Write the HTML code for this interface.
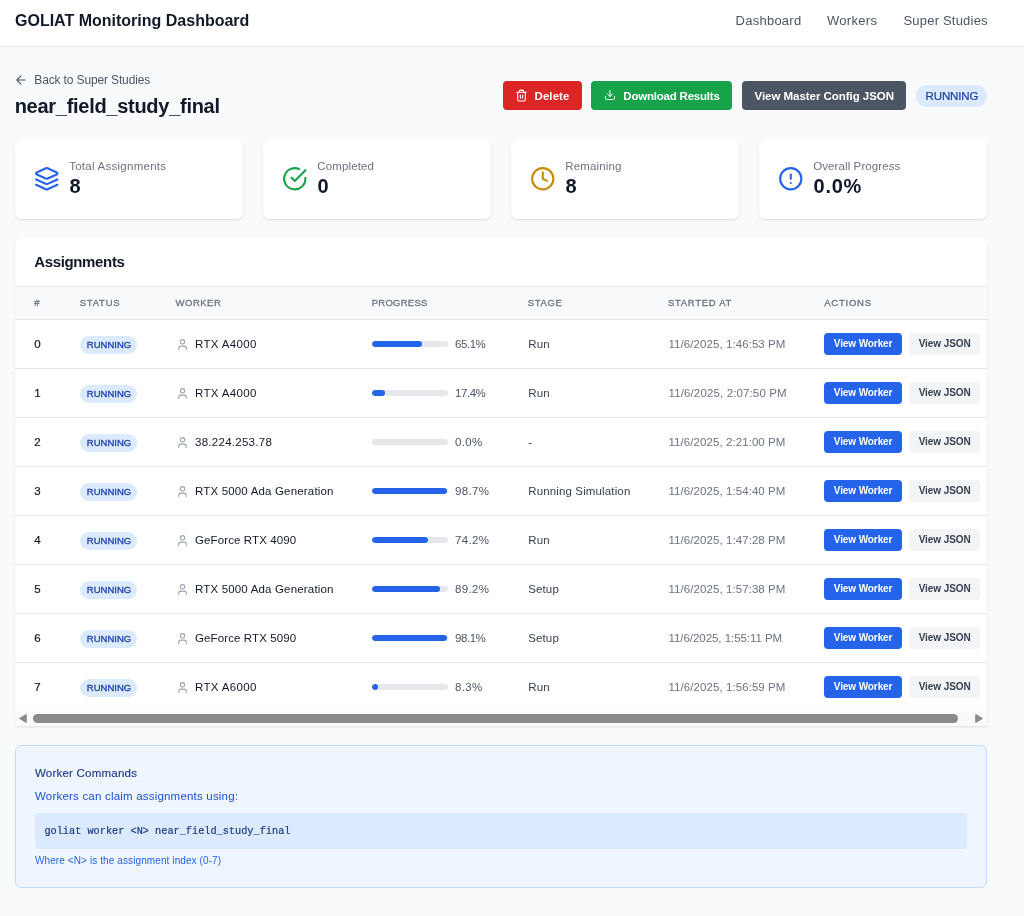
<!DOCTYPE html>
<html><head><meta charset="utf-8"><title>GOLIAT Monitoring Dashboard</title>
<style>
html,body{margin:0;padding:0;}
body{width:1024px;height:916px;position:relative;overflow:hidden;background:#f9fafb;font-family:"Liberation Sans", sans-serif;}
.t{position:absolute;white-space:pre;line-height:1;}
.i{position:absolute;display:block;}
.b{position:absolute;border-radius:4px;}
.card{position:absolute;background:#fff;border-radius:6px;box-shadow:0 1px 3px rgba(0,0,0,0.08),0 1px 2px rgba(0,0,0,0.05);}
</style></head><body><div id="w" style="position:absolute;left:0;top:0;width:1024px;height:916px;will-change:transform">
<div style="position:absolute;left:0;top:0;width:1024px;height:46px;background:#fff;border-bottom:1px solid #e5e7eb"></div>
<div class="t" style="left:15px;top:13.16px;font-size:16px;color:#111827;font-weight:700;letter-spacing:0px;">GOLIAT Monitoring Dashboard</div>
<div class="t" style="left:735.5px;top:13.90px;font-size:13px;color:#4b5563;font-weight:400;letter-spacing:0.26px;">Dashboard</div>
<div class="t" style="left:827px;top:13.90px;font-size:13px;color:#4b5563;font-weight:400;letter-spacing:0.3px;">Workers</div>
<div class="t" style="left:903.5px;top:13.90px;font-size:13px;color:#4b5563;font-weight:400;letter-spacing:0.2px;">Super Studies</div>
<svg class="i" style="left:14.2px;top:72.6px" width="14" height="14" viewBox="0 0 24 24" fill="none" stroke="#4b5563" stroke-width="2" stroke-linecap="round" stroke-linejoin="round"><path d="m12 19-7-7 7-7"/><path d="M19 12H5"/></svg>
<div class="t" style="left:34.3px;top:73.84px;font-size:12px;color:#4b5563;font-weight:400;letter-spacing:-0.14px;">Back to Super Studies</div>
<div class="t" style="left:14.7px;top:95.97px;font-size:20px;color:#111827;font-weight:700;letter-spacing:-0.28px;">near_field_study_final</div>
<div class="b" style="left:503px;top:81px;width:79px;height:29px;background:#dc2626"></div>
<svg class="i" style="left:515px;top:88.5px" width="13" height="13" viewBox="0 0 24 24" fill="none" stroke="#fff" stroke-width="2" stroke-linecap="round" stroke-linejoin="round"><path d="M3 6h18"/><path d="M19 6v14c0 1-1 2-2 2H7c-1 0-2-1-2-2V6"/><path d="M8 6V4c0-1 1-2 2-2h4c1 0 2 1 2 2v2"/><line x1="10" x2="10" y1="11" y2="17"/><line x1="14" x2="14" y1="11" y2="17"/></svg>
<div class="t" style="left:534.5px;top:90.57px;font-size:11.5px;color:#fff;font-weight:700;letter-spacing:0.08px;">Delete</div>
<div class="b" style="left:591px;top:81px;width:141px;height:29px;background:#16a34a"></div>
<svg class="i" style="left:604.2px;top:89.4px" width="12" height="12" viewBox="0 0 24 24" fill="none" stroke="#fff" stroke-width="2" stroke-linecap="round" stroke-linejoin="round"><path d="M21 15v4a2 2 0 0 1-2 2H5a2 2 0 0 1-2-2v-4"/><polyline points="7 10 12 15 17 10"/><line x1="12" x2="12" y1="15" y2="3"/></svg>
<div class="t" style="left:623.3px;top:90.57px;font-size:11.5px;color:#fff;font-weight:700;letter-spacing:-0.21px;">Download Results</div>
<div class="b" style="left:742px;top:81px;width:164px;height:29px;background:#4b5563"></div>
<div class="t" style="left:754.5px;top:90.57px;font-size:11.5px;color:#fff;font-weight:700;letter-spacing:-0.04px;">View Master Config JSON</div>
<div class="b" style="left:916px;top:85px;width:71px;height:22px;background:#dbeafe;border-radius:11px"></div>
<div class="t" style="left:925.6px;top:91.27px;font-size:11.5px;color:#1e40af;font-weight:400;letter-spacing:-0.15px;-webkit-text-stroke:0.2px #1e40af;">RUNNING</div>
<div class="card" style="left:15px;top:139px;width:228px;height:80px"></div>
<svg class="i" style="left:33.9px;top:165.7px" width="25.5" height="25.5" viewBox="0 0 24 24" fill="none" stroke="#2563eb" stroke-width="2" stroke-linecap="round" stroke-linejoin="round"><path d="m12.83 2.18a2 2 0 0 0-1.66 0L2.6 6.08a1 1 0 0 0 0 1.83l8.58 3.91a2 2 0 0 0 1.66 0l8.58-3.9a1 1 0 0 0 0-1.83Z"/><path d="m22 17.65-9.17 4.16a2 2 0 0 1-1.66 0L2 17.65"/><path d="m22 12.65-9.17 4.16a2 2 0 0 1-1.66 0L2 12.65"/></svg>
<div class="t" style="left:69.2px;top:160.97px;font-size:11.5px;color:#6b7280;font-weight:400;letter-spacing:0.26px;">Total Assignments</div>
<div class="t" style="left:69.6px;top:176.07px;font-size:20px;color:#111827;font-weight:700;letter-spacing:0px;">8</div>
<div class="card" style="left:263px;top:139px;width:228px;height:80px"></div>
<svg class="i" style="left:281.9px;top:165.7px" width="25.5" height="25.5" viewBox="0 0 24 24" fill="none" stroke="#16a34a" stroke-width="2" stroke-linecap="round" stroke-linejoin="round"><path d="M22 11.08V12a10 10 0 1 1-5.93-9.14"/><polyline points="22 4 12 14.01 9 11.01"/></svg>
<div class="t" style="left:317.2px;top:160.97px;font-size:11.5px;color:#6b7280;font-weight:400;letter-spacing:0.15px;">Completed</div>
<div class="t" style="left:317.6px;top:176.07px;font-size:20px;color:#111827;font-weight:700;letter-spacing:0px;">0</div>
<div class="card" style="left:511px;top:139px;width:228px;height:80px"></div>
<svg class="i" style="left:529.9px;top:165.7px" width="25.5" height="25.5" viewBox="0 0 24 24" fill="none" stroke="#ca8a04" stroke-width="2" stroke-linecap="round" stroke-linejoin="round"><circle cx="12" cy="12" r="10"/><polyline points="12 6 12 12 16 14"/></svg>
<div class="t" style="left:565.2px;top:160.97px;font-size:11.5px;color:#6b7280;font-weight:400;letter-spacing:0.15px;">Remaining</div>
<div class="t" style="left:565.6px;top:176.07px;font-size:20px;color:#111827;font-weight:700;letter-spacing:0px;">8</div>
<div class="card" style="left:759px;top:139px;width:228px;height:80px"></div>
<svg class="i" style="left:777.9px;top:165.7px" width="25.5" height="25.5" viewBox="0 0 24 24" fill="none" stroke="#2563eb" stroke-width="2" stroke-linecap="round" stroke-linejoin="round"><circle cx="12" cy="12" r="10"/><line x1="12" x2="12" y1="8" y2="12"/><line x1="12" x2="12.01" y1="16" y2="16"/></svg>
<div class="t" style="left:813.2px;top:160.97px;font-size:11.5px;color:#6b7280;font-weight:400;letter-spacing:0.1px;">Overall Progress</div>
<div class="t" style="left:813.6px;top:176.07px;font-size:20px;color:#111827;font-weight:700;letter-spacing:0.7px;">0.0%</div>
<div class="card" style="left:15px;top:238px;width:972px;height:488px;border-radius:6px 6px 0 0;overflow:hidden">
<div class="t" style="left:19.200000000000003px;top:16.40px;font-size:15px;color:#111827;font-weight:700;letter-spacing:-0.35px;">Assignments</div>
<div style="position:absolute;left:0;top:48px;width:990px;height:33px;background:#f9fafb;border-top:1px solid #e5e7eb;border-bottom:1px solid #e5e7eb;box-sizing:border-box;height:34px"></div>
<div class="t" style="left:19.200000000000003px;top:60.46px;font-size:9.5px;color:#6b7280;font-weight:400;letter-spacing:0.4px;-webkit-text-stroke:0.3px #6b7280;">#</div>
<div class="t" style="left:64.7px;top:60.46px;font-size:9.5px;color:#6b7280;font-weight:400;letter-spacing:0.78px;-webkit-text-stroke:0.3px #6b7280;">STATUS</div>
<div class="t" style="left:160.5px;top:60.46px;font-size:9.5px;color:#6b7280;font-weight:400;letter-spacing:0.51px;-webkit-text-stroke:0.3px #6b7280;">WORKER</div>
<div class="t" style="left:356.8px;top:60.46px;font-size:9.5px;color:#6b7280;font-weight:400;letter-spacing:0.24px;-webkit-text-stroke:0.3px #6b7280;">PROGRESS</div>
<div class="t" style="left:512.7px;top:60.46px;font-size:9.5px;color:#6b7280;font-weight:400;letter-spacing:0.65px;-webkit-text-stroke:0.3px #6b7280;">STAGE</div>
<div class="t" style="left:653px;top:60.46px;font-size:9.5px;color:#6b7280;font-weight:400;letter-spacing:0.7px;-webkit-text-stroke:0.3px #6b7280;">STARTED AT</div>
<div class="t" style="left:809.2px;top:60.46px;font-size:9.5px;color:#6b7280;font-weight:400;letter-spacing:0.77px;-webkit-text-stroke:0.3px #6b7280;">ACTIONS</div>
<div style="position:absolute;left:0;top:130px;width:990px;height:1px;background:#e5e7eb"></div>
<div class="t" style="left:19.200000000000003px;top:101.27px;font-size:11.5px;color:#111827;font-weight:400;letter-spacing:0px;-webkit-text-stroke:0.2px #111827;">0</div>
<div class="b" style="left:65px;top:98px;width:57px;height:18px;background:#dbeafe;border-radius:9px"></div>
<div class="t" style="left:71.8px;top:102.36px;font-size:9.5px;color:#1e40af;font-weight:400;letter-spacing:0.0px;-webkit-text-stroke:0.3px #1e40af;">RUNNING</div>
<svg class="i" style="left:161px;top:99.69999999999999px" width="13" height="13" viewBox="0 0 24 24" fill="none" stroke="#9ca3af" stroke-width="2" stroke-linecap="round" stroke-linejoin="round"><path d="M19 21v-2a4 4 0 0 0-4-4H9a4 4 0 0 0-4 4v2"/><circle cx="12" cy="7" r="4"/></svg>
<div class="t" style="left:180px;top:101.27px;font-size:11.5px;color:#111827;font-weight:400;letter-spacing:0.34px;">RTX A4000</div>
<div class="b" style="left:357px;top:103px;width:76px;height:6px;background:#e5e7eb;border-radius:3px;overflow:hidden"><div style="width:49.5px;height:6px;background:#2563eb;border-radius:3px"></div></div>
<div class="t" style="left:440px;top:101.27px;font-size:11.5px;color:#4b5563;font-weight:400;letter-spacing:-0.45000000000000007px;">65.1%</div>
<div class="t" style="left:513.2px;top:101.27px;font-size:11.5px;color:#374151;font-weight:400;letter-spacing:0.14px;">Run</div>
<div class="t" style="left:653.5px;top:101.27px;font-size:11.5px;color:#6b7280;font-weight:400;letter-spacing:0.07px;">11/6/2025, 1:46:53 PM</div>
<div class="b" style="left:809px;top:95px;width:78px;height:22px;background:#2563eb"></div>
<div class="t" style="left:818.8px;top:100.73px;font-size:10px;color:#fff;font-weight:700;letter-spacing:-0.1px;">View Worker</div>
<div class="b" style="left:894px;top:95px;width:71px;height:22px;background:#f3f4f6"></div>
<div class="t" style="left:903.7px;top:100.73px;font-size:10px;color:#374151;font-weight:700;letter-spacing:-0.08px;">View JSON</div>
<div style="position:absolute;left:0;top:179px;width:990px;height:1px;background:#e5e7eb"></div>
<div class="t" style="left:19.200000000000003px;top:150.27px;font-size:11.5px;color:#111827;font-weight:400;letter-spacing:0px;-webkit-text-stroke:0.2px #111827;">1</div>
<div class="b" style="left:65px;top:147px;width:57px;height:18px;background:#dbeafe;border-radius:9px"></div>
<div class="t" style="left:71.8px;top:151.36px;font-size:9.5px;color:#1e40af;font-weight:400;letter-spacing:0.0px;-webkit-text-stroke:0.3px #1e40af;">RUNNING</div>
<svg class="i" style="left:161px;top:148.7px" width="13" height="13" viewBox="0 0 24 24" fill="none" stroke="#9ca3af" stroke-width="2" stroke-linecap="round" stroke-linejoin="round"><path d="M19 21v-2a4 4 0 0 0-4-4H9a4 4 0 0 0-4 4v2"/><circle cx="12" cy="7" r="4"/></svg>
<div class="t" style="left:180px;top:150.27px;font-size:11.5px;color:#111827;font-weight:400;letter-spacing:0.34px;">RTX A4000</div>
<div class="b" style="left:357px;top:152px;width:76px;height:6px;background:#e5e7eb;border-radius:3px;overflow:hidden"><div style="width:13.2px;height:6px;background:#2563eb;border-radius:3px"></div></div>
<div class="t" style="left:440px;top:150.27px;font-size:11.5px;color:#4b5563;font-weight:400;letter-spacing:-0.45000000000000007px;">17.4%</div>
<div class="t" style="left:513.2px;top:150.27px;font-size:11.5px;color:#374151;font-weight:400;letter-spacing:0.14px;">Run</div>
<div class="t" style="left:653.5px;top:150.27px;font-size:11.5px;color:#6b7280;font-weight:400;letter-spacing:0.13px;">11/6/2025, 2:07:50 PM</div>
<div class="b" style="left:809px;top:144px;width:78px;height:22px;background:#2563eb"></div>
<div class="t" style="left:818.8px;top:149.73px;font-size:10px;color:#fff;font-weight:700;letter-spacing:-0.1px;">View Worker</div>
<div class="b" style="left:894px;top:144px;width:71px;height:22px;background:#f3f4f6"></div>
<div class="t" style="left:903.7px;top:149.73px;font-size:10px;color:#374151;font-weight:700;letter-spacing:-0.08px;">View JSON</div>
<div style="position:absolute;left:0;top:228px;width:990px;height:1px;background:#e5e7eb"></div>
<div class="t" style="left:19.200000000000003px;top:199.27px;font-size:11.5px;color:#111827;font-weight:400;letter-spacing:0px;-webkit-text-stroke:0.2px #111827;">2</div>
<div class="b" style="left:65px;top:196px;width:57px;height:18px;background:#dbeafe;border-radius:9px"></div>
<div class="t" style="left:71.8px;top:200.36px;font-size:9.5px;color:#1e40af;font-weight:400;letter-spacing:0.0px;-webkit-text-stroke:0.3px #1e40af;">RUNNING</div>
<svg class="i" style="left:161px;top:197.7px" width="13" height="13" viewBox="0 0 24 24" fill="none" stroke="#9ca3af" stroke-width="2" stroke-linecap="round" stroke-linejoin="round"><path d="M19 21v-2a4 4 0 0 0-4-4H9a4 4 0 0 0-4 4v2"/><circle cx="12" cy="7" r="4"/></svg>
<div class="t" style="left:180px;top:199.27px;font-size:11.5px;color:#111827;font-weight:400;letter-spacing:0.27px;">38.224.253.78</div>
<div class="b" style="left:357px;top:201px;width:76px;height:6px;background:#e5e7eb;border-radius:3px;overflow:hidden"><div style="width:0.0px;height:6px;background:#2563eb;border-radius:3px"></div></div>
<div class="t" style="left:440px;top:199.27px;font-size:11.5px;color:#4b5563;font-weight:400;letter-spacing:0.35px;">0.0%</div>
<div class="t" style="left:513.2px;top:199.27px;font-size:11.5px;color:#374151;font-weight:400;letter-spacing:0.14px;">-</div>
<div class="t" style="left:653.5px;top:199.27px;font-size:11.5px;color:#6b7280;font-weight:400;letter-spacing:0.07px;">11/6/2025, 2:21:00 PM</div>
<div class="b" style="left:809px;top:193px;width:78px;height:22px;background:#2563eb"></div>
<div class="t" style="left:818.8px;top:198.73px;font-size:10px;color:#fff;font-weight:700;letter-spacing:-0.1px;">View Worker</div>
<div class="b" style="left:894px;top:193px;width:71px;height:22px;background:#f3f4f6"></div>
<div class="t" style="left:903.7px;top:198.73px;font-size:10px;color:#374151;font-weight:700;letter-spacing:-0.08px;">View JSON</div>
<div style="position:absolute;left:0;top:277px;width:990px;height:1px;background:#e5e7eb"></div>
<div class="t" style="left:19.200000000000003px;top:248.27px;font-size:11.5px;color:#111827;font-weight:400;letter-spacing:0px;-webkit-text-stroke:0.2px #111827;">3</div>
<div class="b" style="left:65px;top:245px;width:57px;height:18px;background:#dbeafe;border-radius:9px"></div>
<div class="t" style="left:71.8px;top:249.36px;font-size:9.5px;color:#1e40af;font-weight:400;letter-spacing:0.0px;-webkit-text-stroke:0.3px #1e40af;">RUNNING</div>
<svg class="i" style="left:161px;top:246.7px" width="13" height="13" viewBox="0 0 24 24" fill="none" stroke="#9ca3af" stroke-width="2" stroke-linecap="round" stroke-linejoin="round"><path d="M19 21v-2a4 4 0 0 0-4-4H9a4 4 0 0 0-4 4v2"/><circle cx="12" cy="7" r="4"/></svg>
<div class="t" style="left:180px;top:248.27px;font-size:11.5px;color:#111827;font-weight:400;letter-spacing:0.17px;">RTX 5000 Ada Generation</div>
<div class="b" style="left:357px;top:250px;width:76px;height:6px;background:#e5e7eb;border-radius:3px;overflow:hidden"><div style="width:75.0px;height:6px;background:#2563eb;border-radius:3px"></div></div>
<div class="t" style="left:440px;top:248.27px;font-size:11.5px;color:#4b5563;font-weight:400;letter-spacing:0.35px;">98.7%</div>
<div class="t" style="left:513.2px;top:248.27px;font-size:11.5px;color:#374151;font-weight:400;letter-spacing:0.14px;">Running Simulation</div>
<div class="t" style="left:653.5px;top:248.27px;font-size:11.5px;color:#6b7280;font-weight:400;letter-spacing:0.07px;">11/6/2025, 1:54:40 PM</div>
<div class="b" style="left:809px;top:242px;width:78px;height:22px;background:#2563eb"></div>
<div class="t" style="left:818.8px;top:247.73px;font-size:10px;color:#fff;font-weight:700;letter-spacing:-0.1px;">View Worker</div>
<div class="b" style="left:894px;top:242px;width:71px;height:22px;background:#f3f4f6"></div>
<div class="t" style="left:903.7px;top:247.73px;font-size:10px;color:#374151;font-weight:700;letter-spacing:-0.08px;">View JSON</div>
<div style="position:absolute;left:0;top:326px;width:990px;height:1px;background:#e5e7eb"></div>
<div class="t" style="left:19.200000000000003px;top:297.27px;font-size:11.5px;color:#111827;font-weight:400;letter-spacing:0px;-webkit-text-stroke:0.2px #111827;">4</div>
<div class="b" style="left:65px;top:294px;width:57px;height:18px;background:#dbeafe;border-radius:9px"></div>
<div class="t" style="left:71.8px;top:298.36px;font-size:9.5px;color:#1e40af;font-weight:400;letter-spacing:0.0px;-webkit-text-stroke:0.3px #1e40af;">RUNNING</div>
<svg class="i" style="left:161px;top:295.70000000000005px" width="13" height="13" viewBox="0 0 24 24" fill="none" stroke="#9ca3af" stroke-width="2" stroke-linecap="round" stroke-linejoin="round"><path d="M19 21v-2a4 4 0 0 0-4-4H9a4 4 0 0 0-4 4v2"/><circle cx="12" cy="7" r="4"/></svg>
<div class="t" style="left:180px;top:297.27px;font-size:11.5px;color:#111827;font-weight:400;letter-spacing:0.11px;">GeForce RTX 4090</div>
<div class="b" style="left:357px;top:299px;width:76px;height:6px;background:#e5e7eb;border-radius:3px;overflow:hidden"><div style="width:56.4px;height:6px;background:#2563eb;border-radius:3px"></div></div>
<div class="t" style="left:440px;top:297.27px;font-size:11.5px;color:#4b5563;font-weight:400;letter-spacing:0.35px;">74.2%</div>
<div class="t" style="left:513.2px;top:297.27px;font-size:11.5px;color:#374151;font-weight:400;letter-spacing:0.14px;">Run</div>
<div class="t" style="left:653.5px;top:297.27px;font-size:11.5px;color:#6b7280;font-weight:400;letter-spacing:0.07px;">11/6/2025, 1:47:28 PM</div>
<div class="b" style="left:809px;top:291px;width:78px;height:22px;background:#2563eb"></div>
<div class="t" style="left:818.8px;top:296.74px;font-size:10px;color:#fff;font-weight:700;letter-spacing:-0.1px;">View Worker</div>
<div class="b" style="left:894px;top:291px;width:71px;height:22px;background:#f3f4f6"></div>
<div class="t" style="left:903.7px;top:296.74px;font-size:10px;color:#374151;font-weight:700;letter-spacing:-0.08px;">View JSON</div>
<div style="position:absolute;left:0;top:375px;width:990px;height:1px;background:#e5e7eb"></div>
<div class="t" style="left:19.200000000000003px;top:346.27px;font-size:11.5px;color:#111827;font-weight:400;letter-spacing:0px;-webkit-text-stroke:0.2px #111827;">5</div>
<div class="b" style="left:65px;top:343px;width:57px;height:18px;background:#dbeafe;border-radius:9px"></div>
<div class="t" style="left:71.8px;top:347.36px;font-size:9.5px;color:#1e40af;font-weight:400;letter-spacing:0.0px;-webkit-text-stroke:0.3px #1e40af;">RUNNING</div>
<svg class="i" style="left:161px;top:344.70000000000005px" width="13" height="13" viewBox="0 0 24 24" fill="none" stroke="#9ca3af" stroke-width="2" stroke-linecap="round" stroke-linejoin="round"><path d="M19 21v-2a4 4 0 0 0-4-4H9a4 4 0 0 0-4 4v2"/><circle cx="12" cy="7" r="4"/></svg>
<div class="t" style="left:180px;top:346.27px;font-size:11.5px;color:#111827;font-weight:400;letter-spacing:0.17px;">RTX 5000 Ada Generation</div>
<div class="b" style="left:357px;top:348px;width:76px;height:6px;background:#e5e7eb;border-radius:3px;overflow:hidden"><div style="width:67.8px;height:6px;background:#2563eb;border-radius:3px"></div></div>
<div class="t" style="left:440px;top:346.27px;font-size:11.5px;color:#4b5563;font-weight:400;letter-spacing:0.35px;">89.2%</div>
<div class="t" style="left:513.2px;top:346.27px;font-size:11.5px;color:#374151;font-weight:400;letter-spacing:0.14px;">Setup</div>
<div class="t" style="left:653.5px;top:346.27px;font-size:11.5px;color:#6b7280;font-weight:400;letter-spacing:0.07px;">11/6/2025, 1:57:38 PM</div>
<div class="b" style="left:809px;top:340px;width:78px;height:22px;background:#2563eb"></div>
<div class="t" style="left:818.8px;top:345.74px;font-size:10px;color:#fff;font-weight:700;letter-spacing:-0.1px;">View Worker</div>
<div class="b" style="left:894px;top:340px;width:71px;height:22px;background:#f3f4f6"></div>
<div class="t" style="left:903.7px;top:345.74px;font-size:10px;color:#374151;font-weight:700;letter-spacing:-0.08px;">View JSON</div>
<div style="position:absolute;left:0;top:424px;width:990px;height:1px;background:#e5e7eb"></div>
<div class="t" style="left:19.200000000000003px;top:395.27px;font-size:11.5px;color:#111827;font-weight:400;letter-spacing:0px;-webkit-text-stroke:0.2px #111827;">6</div>
<div class="b" style="left:65px;top:392px;width:57px;height:18px;background:#dbeafe;border-radius:9px"></div>
<div class="t" style="left:71.8px;top:396.36px;font-size:9.5px;color:#1e40af;font-weight:400;letter-spacing:0.0px;-webkit-text-stroke:0.3px #1e40af;">RUNNING</div>
<svg class="i" style="left:161px;top:393.70000000000005px" width="13" height="13" viewBox="0 0 24 24" fill="none" stroke="#9ca3af" stroke-width="2" stroke-linecap="round" stroke-linejoin="round"><path d="M19 21v-2a4 4 0 0 0-4-4H9a4 4 0 0 0-4 4v2"/><circle cx="12" cy="7" r="4"/></svg>
<div class="t" style="left:180px;top:395.27px;font-size:11.5px;color:#111827;font-weight:400;letter-spacing:0.11px;">GeForce RTX 5090</div>
<div class="b" style="left:357px;top:397px;width:76px;height:6px;background:#e5e7eb;border-radius:3px;overflow:hidden"><div style="width:74.6px;height:6px;background:#2563eb;border-radius:3px"></div></div>
<div class="t" style="left:440px;top:395.27px;font-size:11.5px;color:#4b5563;font-weight:400;letter-spacing:-0.45000000000000007px;">98.1%</div>
<div class="t" style="left:513.2px;top:395.27px;font-size:11.5px;color:#374151;font-weight:400;letter-spacing:0.14px;">Setup</div>
<div class="t" style="left:653.5px;top:395.27px;font-size:11.5px;color:#6b7280;font-weight:400;letter-spacing:-0.04999999999999999px;">11/6/2025, 1:55:11 PM</div>
<div class="b" style="left:809px;top:389px;width:78px;height:22px;background:#2563eb"></div>
<div class="t" style="left:818.8px;top:394.74px;font-size:10px;color:#fff;font-weight:700;letter-spacing:-0.1px;">View Worker</div>
<div class="b" style="left:894px;top:389px;width:71px;height:22px;background:#f3f4f6"></div>
<div class="t" style="left:903.7px;top:394.74px;font-size:10px;color:#374151;font-weight:700;letter-spacing:-0.08px;">View JSON</div>
<div class="t" style="left:19.200000000000003px;top:444.27px;font-size:11.5px;color:#111827;font-weight:400;letter-spacing:0px;-webkit-text-stroke:0.2px #111827;">7</div>
<div class="b" style="left:65px;top:441px;width:57px;height:18px;background:#dbeafe;border-radius:9px"></div>
<div class="t" style="left:71.8px;top:445.36px;font-size:9.5px;color:#1e40af;font-weight:400;letter-spacing:0.0px;-webkit-text-stroke:0.3px #1e40af;">RUNNING</div>
<svg class="i" style="left:161px;top:442.70000000000005px" width="13" height="13" viewBox="0 0 24 24" fill="none" stroke="#9ca3af" stroke-width="2" stroke-linecap="round" stroke-linejoin="round"><path d="M19 21v-2a4 4 0 0 0-4-4H9a4 4 0 0 0-4 4v2"/><circle cx="12" cy="7" r="4"/></svg>
<div class="t" style="left:180px;top:444.27px;font-size:11.5px;color:#111827;font-weight:400;letter-spacing:0.34px;">RTX A6000</div>
<div class="b" style="left:357px;top:446px;width:76px;height:6px;background:#e5e7eb;border-radius:3px;overflow:hidden"><div style="width:6.3px;height:6px;background:#2563eb;border-radius:3px"></div></div>
<div class="t" style="left:440px;top:444.27px;font-size:11.5px;color:#4b5563;font-weight:400;letter-spacing:0.35px;">8.3%</div>
<div class="t" style="left:513.2px;top:444.27px;font-size:11.5px;color:#374151;font-weight:400;letter-spacing:0.14px;">Run</div>
<div class="t" style="left:653.5px;top:444.27px;font-size:11.5px;color:#6b7280;font-weight:400;letter-spacing:0.07px;">11/6/2025, 1:56:59 PM</div>
<div class="b" style="left:809px;top:438px;width:78px;height:22px;background:#2563eb"></div>
<div class="t" style="left:818.8px;top:443.74px;font-size:10px;color:#fff;font-weight:700;letter-spacing:-0.1px;">View Worker</div>
<div class="b" style="left:894px;top:438px;width:71px;height:22px;background:#f3f4f6"></div>
<div class="t" style="left:903.7px;top:443.74px;font-size:10px;color:#374151;font-weight:700;letter-spacing:-0.08px;">View JSON</div>
<div style="position:absolute;left:0;top:473px;width:972px;height:15px;background:#fafafa"></div>
<div style="position:absolute;left:18px;top:476px;width:925px;height:9px;background:#8a8a8a;border-radius:4.5px"></div>
<svg class="i" style="left:4.199999999999999px;top:476.20000000000005px" width="8" height="9" viewBox="0 0 8 9"><path d="M7.1 0.9 L0.9 4.5 L7.1 8.1 Z" fill="#8a8a8a" stroke="#8a8a8a" stroke-width="1.4" stroke-linejoin="round"/></svg>
<svg class="i" style="left:959.8px;top:476.20000000000005px" width="8" height="9" viewBox="0 0 8 9"><path d="M0.9 0.9 L7.1 4.5 L0.9 8.1 Z" fill="#8a8a8a" stroke="#8a8a8a" stroke-width="1.4" stroke-linejoin="round"/></svg>
</div>
<div style="position:absolute;left:15px;top:745px;width:972px;height:143px;box-sizing:border-box;background:#eff6ff;border:1px solid #bfdbfe;border-radius:6px"></div>
<div class="t" style="left:35px;top:767.87px;font-size:11.5px;color:#1e3a8a;font-weight:400;letter-spacing:0.22px;-webkit-text-stroke:0.15px #1e3a8a;">Worker Commands</div>
<div class="t" style="left:35px;top:791.07px;font-size:11.5px;color:#1d4ed8;font-weight:400;letter-spacing:0.2px;">Workers can claim assignments using:</div>
<div class="b" style="left:35px;top:813px;width:932px;height:36px;background:#dbeafe"></div>
<div class="t" style="left:44.4px;top:825.52px;font-size:10.25px;color:#1e3a8a;font-weight:400;letter-spacing:0px;font-family:'Liberation Mono',monospace;-webkit-text-stroke:0.2px #1e3a8a;">goliat worker &lt;N&gt; near_field_study_final</div>
<div class="t" style="left:35px;top:856.13px;font-size:10px;color:#2563eb;font-weight:400;letter-spacing:0.1px;">Where &lt;N&gt; is the assignment index (0-7)</div>
</div></body></html>
